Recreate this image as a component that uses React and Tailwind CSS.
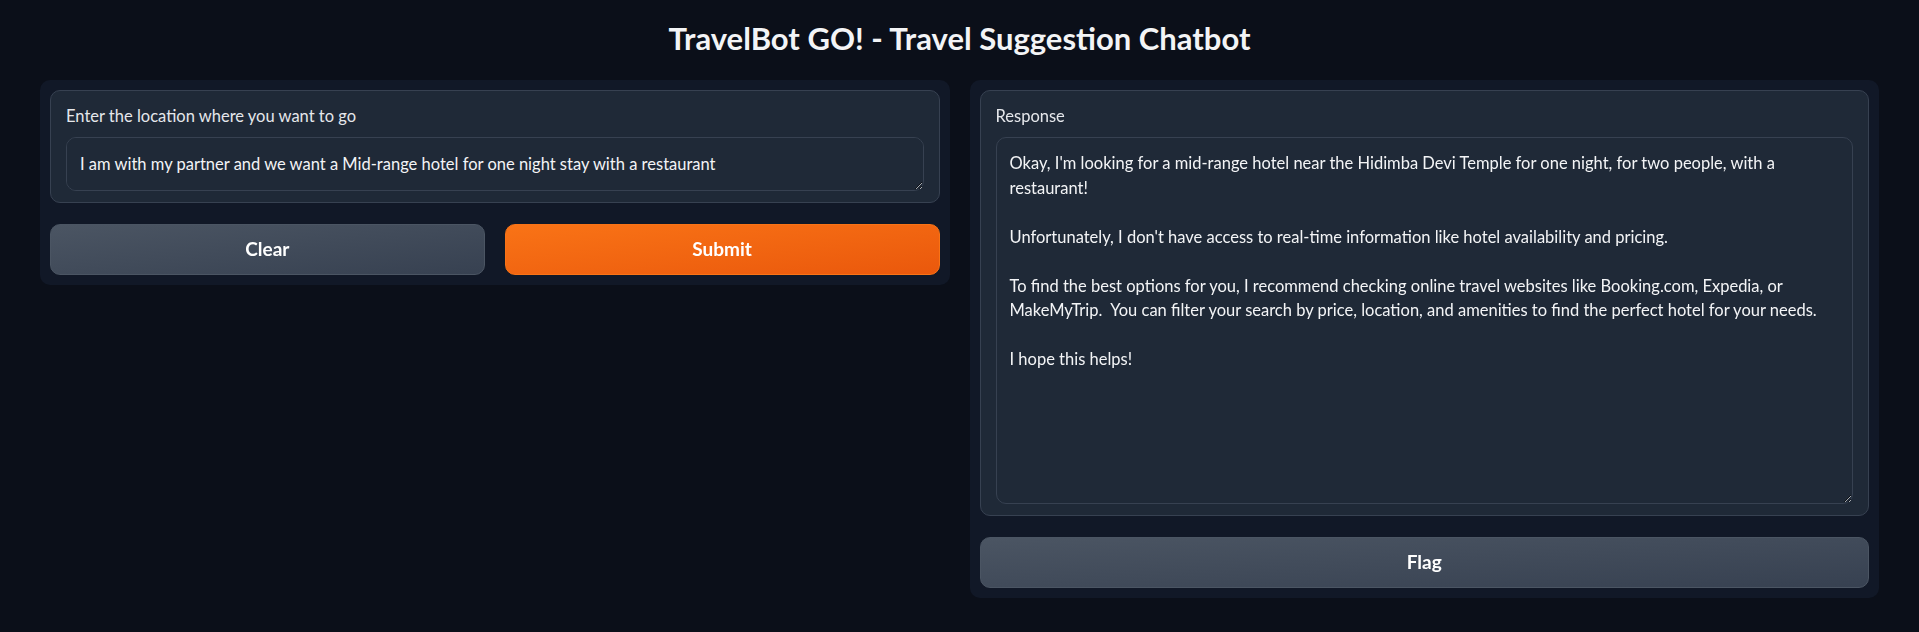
import React from 'react';

const question = 'I am with my partner and we want a Mid-range hotel for one night stay with a restaurant';

const answer = [
  "Okay, I'm looking for a mid-range hotel near the Hidimba Devi Temple for one night, for two people, with a restaurant!",
  '',
  "Unfortunately, I don't have access to real-time information like hotel availability and pricing.",
  '',
  'To find the best options for you, I recommend checking online travel websites like Booking.com, Expedia, or MakeMyTrip.  You can filter your search by price, location, and amenities to find the perfect hotel for your needs.',
  '',
  'I hope this helps!',
].join('\n');

export default function App() {
  return (
    <div className="min-h-screen bg-[#0b0f19] px-10 font-['Lato','Noto_Sans',sans-serif] [color-scheme:dark]">
      <h1 className="pt-5 pb-6 text-center text-[31px] font-bold leading-9 text-[#f3f4f6]">
        TravelBot GO! - Travel Suggestion Chatbot
      </h1>

      <div className="grid grid-cols-2 items-start gap-5">
        <Panel>
          <Field label="Enter the location where you want to go">
            <textarea
              readOnly
              rows={1}
              defaultValue={question}
              className="block h-[54px] w-full rounded-[10px] border border-[#374151] bg-[#1f2937] px-[13px] py-[14px] text-[16.5px] leading-[24.5px] text-[#f3f4f6] outline-none"
            />
          </Field>
          <div className="grid grid-cols-2 gap-5">
            <Button>Clear</Button>
            <Button primary>Submit</Button>
          </div>
        </Panel>

        <Panel>
          <Field label="Response">
            <textarea
              readOnly
              defaultValue={answer}
              className="block h-[367px] w-full rounded-[10px] border border-[#374151] bg-[#1f2937] px-[13px] pt-[13px] pb-3 text-[16.5px] leading-[24.5px] text-[#f3f4f6] outline-none"
            />
          </Field>
          <Button>Flag</Button>
        </Panel>
      </div>
    </div>
  );
}

function Panel({ children }) {
  return <div className="flex flex-col gap-[21px] rounded-[10px] bg-[#111827] p-[10px]">{children}</div>;
}

function Field({ label, children }) {
  return (
    <div className="rounded-[10px] border border-[#374151] bg-[#1f2937] px-[15px] pt-[13px] pb-[11px]">
      <div className="mb-[9px] text-[16.5px] leading-6 text-[#e5e7eb]">{label}</div>
      {children}
    </div>
  );
}

function Button({ primary, children }) {
  const tone = primary
    ? 'border-[#f97316] bg-gradient-to-br from-[#f97316] to-[#ea580c]'
    : 'border-[#4b5563] bg-gradient-to-br from-[#4b5563] to-[#374151]';
  return (
    <button className={`h-[51px] w-full rounded-[10px] border text-[19px] font-bold text-white ${tone}`}>
      {children}
    </button>
  );
}
